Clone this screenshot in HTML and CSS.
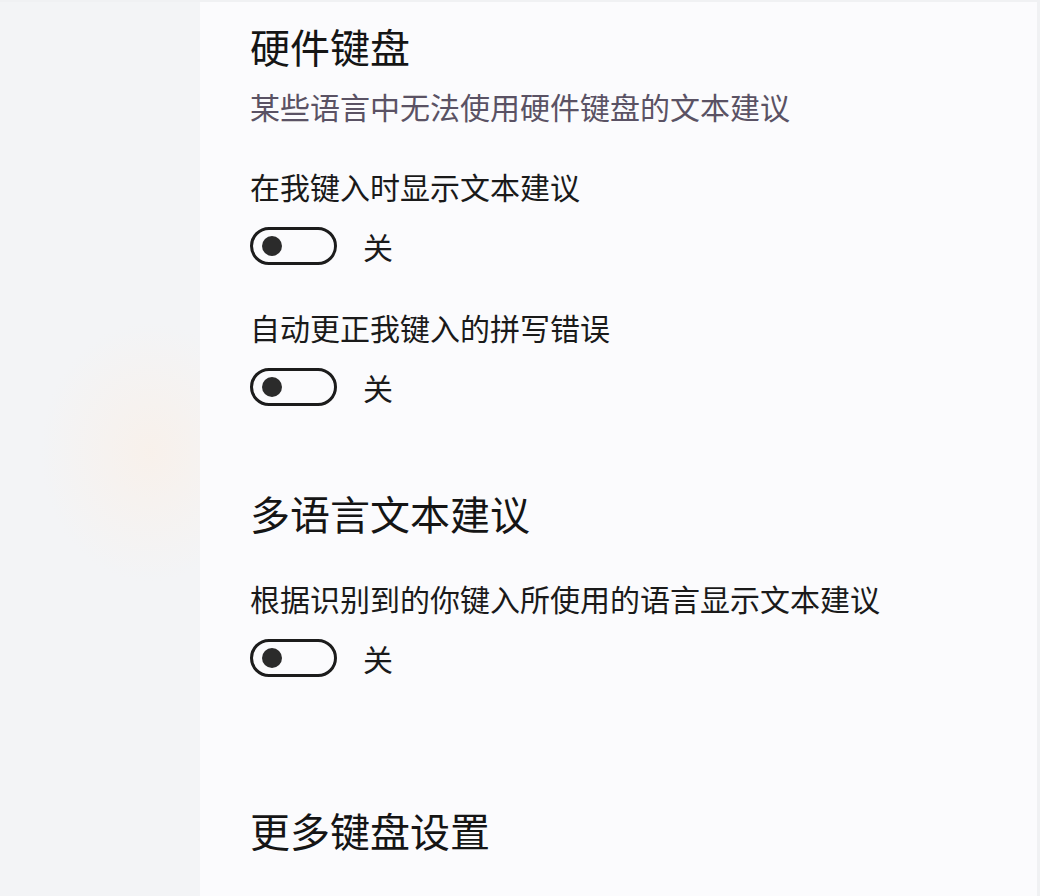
FILE: index.html
```html
<!DOCTYPE html>
<html lang="zh-CN">
<head>
<meta charset="utf-8">
<title>键盘设置</title>
<link rel="stylesheet" href="styles.css">
</head>
<body>
<div class="page">
  <aside class="sidebar"></aside>
  <main class="content">
    <section class="group group-first">
      <h2 class="heading">硬件键盘</h2>
      <p class="desc">某些语言中无法使用硬件键盘的文本建议</p>
      <div class="setting">
        <div class="label">在我键入时显示文本建议</div>
        <div class="toggle-row"><span class="toggle"><span class="knob"></span></span><span class="state">关</span></div>
      </div>
      <div class="setting">
        <div class="label">自动更正我键入的拼写错误</div>
        <div class="toggle-row"><span class="toggle"><span class="knob"></span></span><span class="state">关</span></div>
      </div>
    </section>
    <section class="group group-multi">
      <h2 class="heading">多语言文本建议</h2>
      <div class="setting setting-tight">
        <div class="label">根据识别到的你键入所使用的语言显示文本建议</div>
        <div class="toggle-row"><span class="toggle"><span class="knob"></span></span><span class="state">关</span></div>
      </div>
    </section>
    <section class="group group-more">
      <h2 class="heading">更多键盘设置</h2>
    </section>
  </main>
</div>
</body>
</html>
```
FILE: styles.css
```css
html, body {
  margin: 0;
  padding: 0;
  height: 100%;
}
body {
  font-family: "Microsoft YaHei", "Noto Sans CJK SC", "Noto Sans", sans-serif;
  background: #fbfbfd;
  color: #1a1a1a;
  overflow: hidden;
}
.page {
  display: flex;
  height: 896px;
  border-top: 2px solid #f0f1f3;
  box-sizing: border-box;
}
.sidebar {
  width: 200px;
  flex: none;
  background:
    radial-gradient(ellipse 110px 130px at 150px 450px, rgba(252, 238, 226, 0.55), rgba(252, 238, 226, 0) 100%),
    #f3f4f6;
}
.content {
  flex: 1;
  padding: 16px 0 0 50px;
  border-right: 3px solid #f0f1f3;
}
.heading {
  margin: 0;
  font-size: 40px;
  line-height: 56px;
  font-weight: 400;
  color: #151515;
}
.desc {
  margin: 12px 0 0;
  font-size: 30px;
  line-height: 40px;
  color: #5a5264;
}
.setting {
  margin-top: 40px;
}
.setting + .setting {
  margin-top: 42px;
}
.setting-tight {
  margin-top: 37px;
}
.label {
  font-size: 30px;
  line-height: 40px;
  color: #1a1a1a;
}
.toggle-row {
  display: flex;
  align-items: center;
  gap: 26px;
  margin-top: 21px;
  height: 38px;
}
.toggle {
  width: 87px;
  height: 38px;
  box-sizing: border-box;
  border: 3px solid #1c1c1c;
  border-radius: 19px;
  display: flex;
  align-items: center;
  padding-left: 9px;
}
.knob {
  width: 20px;
  height: 20px;
  border-radius: 50%;
  background: #2b2b2b;
}
.state {
  font-size: 30px;
  line-height: 40px;
  color: #1a1a1a;
}
.group-multi {
  margin-top: 79px;
}
.group-more {
  margin-top: 125px;
}
```
